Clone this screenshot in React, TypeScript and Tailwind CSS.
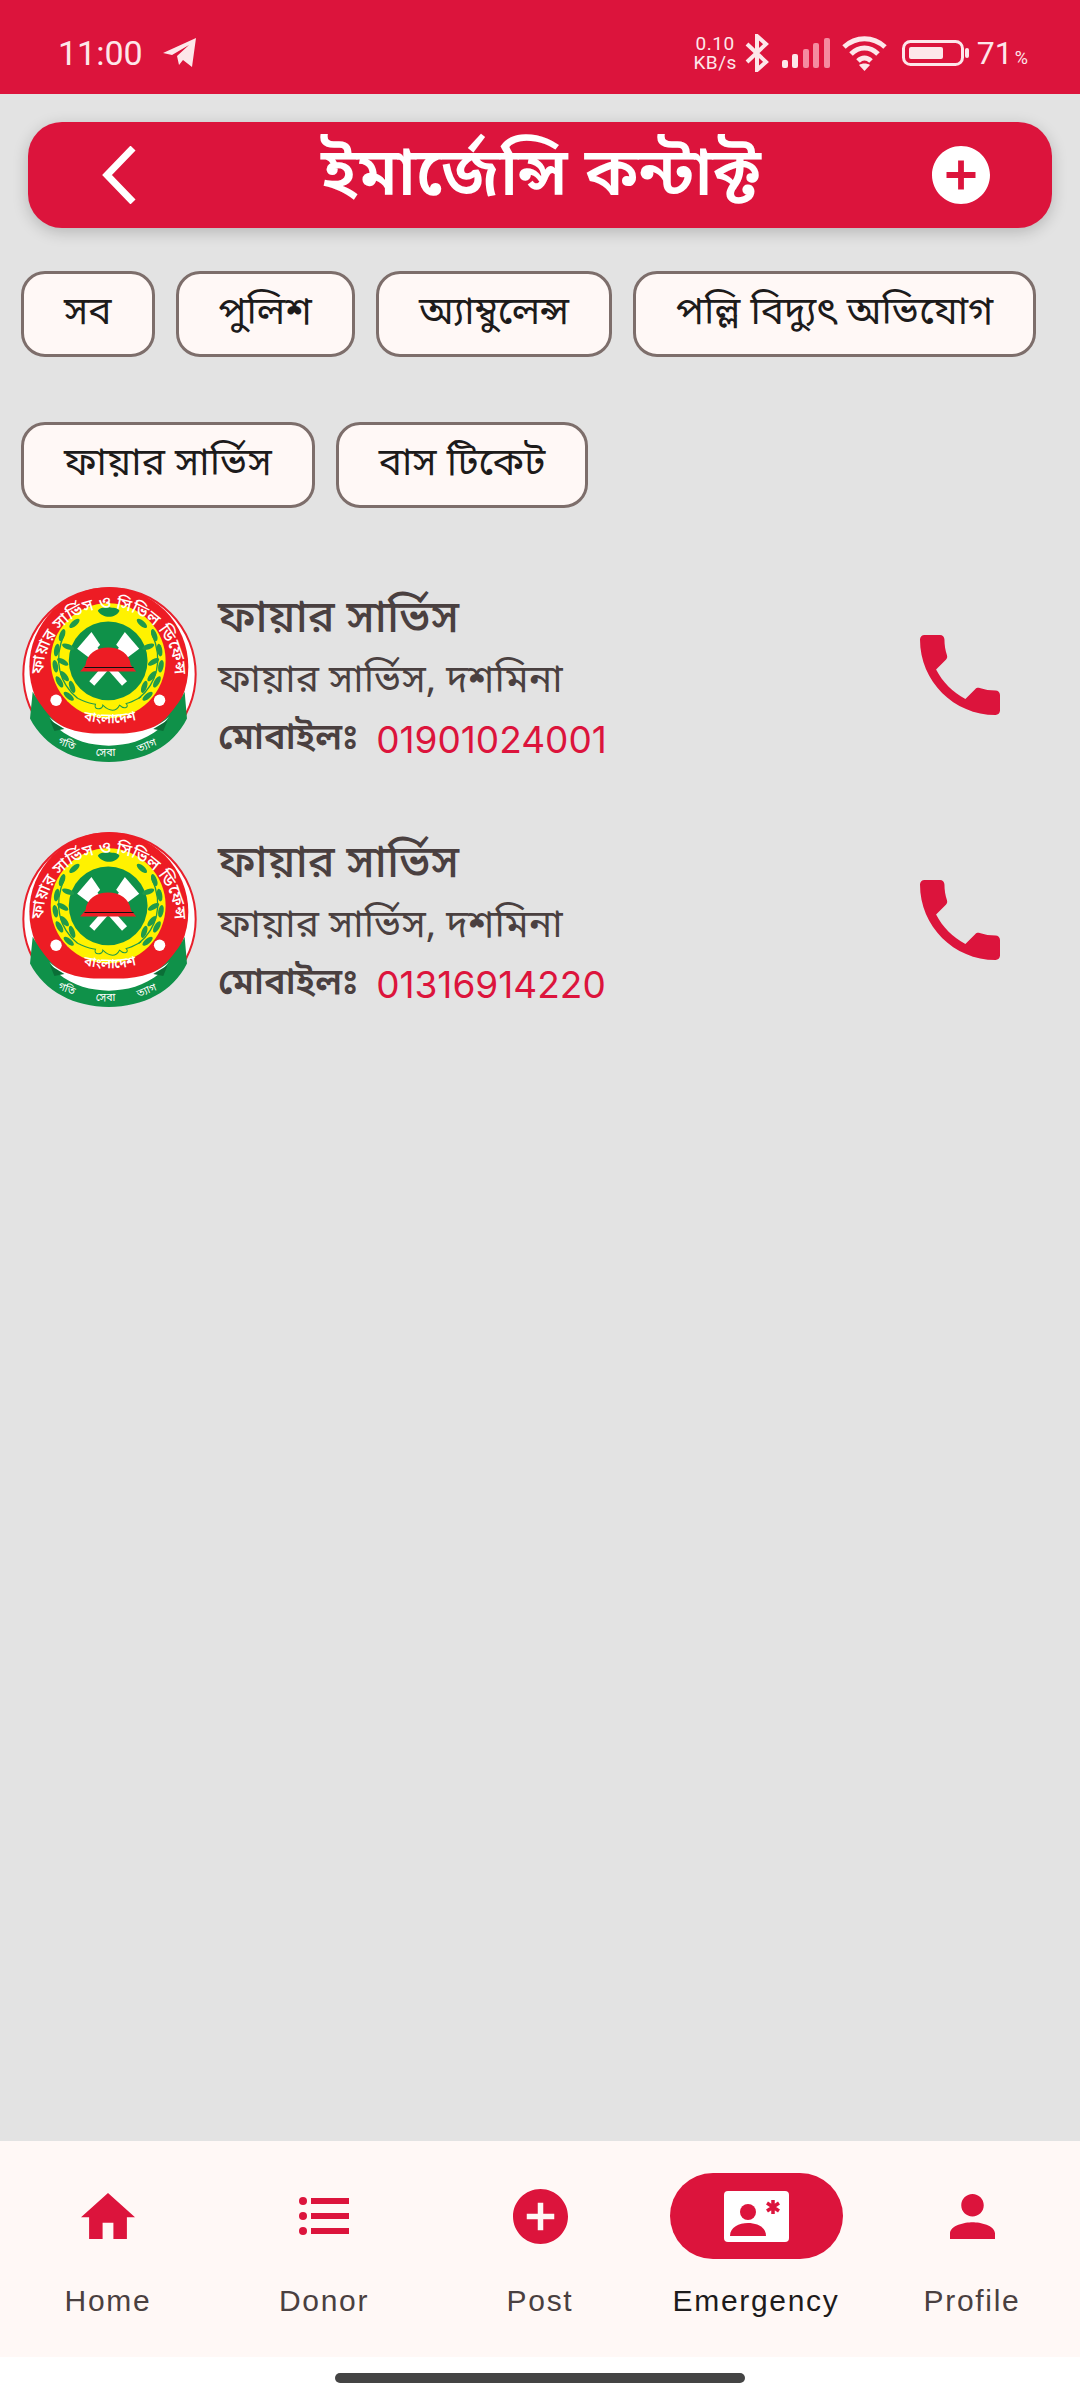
const BN = "font-['Noto_Sans_Bengali','Noto_Sans','Noto_Sans_CJK_SC',sans-serif]";

function Chip({ label }: { label: string }) {
  return (
    <div className="flex h-[86px] items-center rounded-[24px] border-[3px] border-[#7d6e6b] bg-[#fff8f6] px-[40px] text-[39px] font-normal text-[#1d1b1b]">
      {label}
    </div>
  );
}

function Logo() {
  const leaves = (flip: boolean) => (
    <g transform={flip ? "translate(592 0) scale(-1 1)" : undefined} fill="#1f9a4a">
      <path d="M205 385 C150 340 130 270 165 190" fill="none" stroke="#1f9a4a" strokeWidth="4" />
      {[
        [195, 160, -40], [158, 195, -70], [176, 230, 20], [142, 240, -80], [160, 275, 30],
        [138, 288, -100], [165, 318, 50], [150, 335, -120], [188, 350, 70], [178, 378, -140],
      ].map(([x, y, r], i) => (
        <ellipse key={i} cx={x} cy={y} rx="19" ry="8" transform={`rotate(${r} ${x} ${y})`} />
      ))}
    </g>
  );
  return (
    <svg viewBox="35 48 530 530" className="h-[177px] w-[177px] shrink-0">
      <circle cx="300" cy="312" r="258" fill="#fff" stroke="#e8202c" strokeWidth="6" />
      <circle cx="298" cy="290" r="238" fill="#ed1c24" />
      <path d="M70 365 C90 400 105 420 128 445 C175 490 240 505 298 505 C356 505 420 490 468 445 C490 420 508 400 525 365 L532 445 C490 530 400 575 298 575 C196 575 106 530 62 445 Z" fill="#0f9149" />
      <path d="M120 440 C175 490 240 490 298 490 C356 490 420 490 478 440 L450 475 C405 512 350 526 298 526 C246 526 190 512 146 475 Z" fill="#fff" />
      <path d="M122 450 L165 476 L135 482 Z M474 450 L431 476 L461 482 Z" fill="#0b6e37" />
      <circle cx="296" cy="272" r="172" fill="#fff200" />
      <circle cx="296" cy="272" r="118" fill="#0f9149" />
      {leaves(false)}
      {leaves(true)}
      <path d="M265 122 C275 108 285 118 295 108 C305 118 320 108 330 122 C318 146 280 146 265 122 Z" fill="#0f9149" />
      <g stroke="#fff" strokeWidth="20" fill="none">
        <path d="M232 212 L345 340" />
        <path d="M360 212 L247 340" />
      </g>
      <path d="M203 236 L246 186 L272 224 L238 262 Z" fill="#fff" />
      <path d="M389 236 L346 186 L320 224 L354 262 Z" fill="#fff" />
      <path d="M212 304 L228 285 C232 250 262 232 296 232 C330 232 360 250 364 285 L380 304 Z" fill="#ed1c24" />
      <path d="M225 292 H372" stroke="#111" strokeWidth="3" />
      <circle cx="140" cy="390" r="17" fill="#fff" />
      <circle cx="450" cy="390" r="17" fill="#fff" />
      <path d="M205 385 C230 395 240 400 258 402 C250 420 280 420 280 405 C300 425 320 425 330 405 C345 420 360 410 350 400 C370 395 385 385 395 380" fill="none" stroke="#1f9a4a" strokeWidth="3" />
      <defs>
        <path id="logoTop" d="M101 312 A197 197 0 1 1 495 312" />
        <path id="logoMid" d="M188 438 Q300 480 415 438" />
      </defs>
      <text fill="#fff" fontSize="50" fontWeight="500">
        <textPath href="#logoTop" startOffset="50%" textAnchor="middle">ফায়ার সার্ভিস ও সিভিল ডিফেন্স</textPath>
      </text>
      <text fill="#fff" fontSize="40" fontWeight="600">
        <textPath href="#logoMid" startOffset="50%" textAnchor="middle">বাংলাদেশ</textPath>
      </text>
      <text x="168" y="530" fill="#fff" fontSize="32" textAnchor="middle" transform="rotate(22 168 530)">গতি</text>
      <text x="288" y="558" fill="#fff" fontSize="32" textAnchor="middle">সেবা</text>
      <text x="415" y="535" fill="#fff" fontSize="32" textAnchor="middle" transform="rotate(-22 415 535)">ত্যাগ</text>
    </svg>
  );
}

function Phone() {
  return (
    <svg viewBox="3 3 18 18" className="h-[80px] w-[80px] fill-[#dc143c]">
      <path d="M6.62 10.79c1.44 2.83 3.76 5.14 6.59 6.59l2.2-2.2c.27-.27.67-.36 1.02-.24 1.12.37 2.33.57 3.57.57.55 0 1 .45 1 1V20c0 .55-.45 1-1 1-9.39 0-17-7.61-17-17 0-.55.45-1 1-1h3.5c.55 0 1 .45 1 1 0 1.25.2 2.45.57 3.57.11.35.03.74-.25 1.02l-2.2 2.2z" />
    </svg>
  );
}

function Contact({ number }: { number: string }) {
  return (
    <div className="flex h-[177px] items-center">
      <Logo />
      <div className="ml-[20px] flex flex-1 flex-col pt-[8px] text-[#4a4040]">
        <div className="text-[45px] font-medium leading-[62px]">ফায়ার সার্ভিস</div>
        <div className="text-[39px] leading-[60px]">ফায়ার সার্ভিস, দশমিনা</div>
        <div className="flex items-center text-[36px] font-semibold leading-[56px]">
          <span>মোবাইলঃ</span>
          <span className="ml-[18px] font-['Inter',sans-serif] text-[37px] font-normal text-[#dc143c]">{number}</span>
        </div>
      </div>
      <div className="mr-[80px]">
        <Phone />
      </div>
    </div>
  );
}

function NavItem({ label, icon, active }: { label: string; icon: React.ReactNode; active?: boolean }) {
  return (
    <div className="flex flex-1 flex-col items-center">
      <div className={`flex h-[86px] w-[173px] items-center justify-center rounded-full ${active ? "bg-[#dc143c]" : ""}`}>{icon}</div>
      <div className={`mt-[24px] font-['Liberation_Sans',sans-serif] text-[30px] leading-[36px] tracking-[1.7px] ${active ? "text-[#1d1b1b]" : "text-[#4a4040]"}`}>
        {label}
      </div>
    </div>
  );
}

export default function App() {
  return (
    <div className={`flex h-[2400px] w-[1080px] flex-col bg-white ${BN}`}>
      {/* status bar */}
      <div className="flex h-[94px] items-center justify-between bg-[#dc143c] pl-[58px] pr-[52px] pt-[12px] text-[#fde7ea]">
        <div className="flex items-center gap-[20px]">
          <span className="font-['Roboto',sans-serif] text-[34px]">11:00</span>
          <svg viewBox="0 0 34 30" className="h-[30px] w-[34px] fill-[#fde7ea]">
            <path d="M0 15 L33 0 L29 29 L20 22 L16 27 L14 18 L26 7 L9 17 Z" />
          </svg>
        </div>
        <div className="flex items-center font-['Roboto',sans-serif]">
          <div className="flex flex-col items-center text-[19px] leading-[19px] tracking-[0.5px]">
            <span>0.10</span>
            <span>KB/s</span>
          </div>
          <svg viewBox="0 0 24 38" className="ml-[8px] h-[38px] w-[24px] fill-none stroke-[#fde7ea] stroke-[4]">
            <path d="M2 10 L21 28 L12 36 V2 L21 10 L2 28" />
          </svg>
          <svg viewBox="0 0 48 30" className="ml-[13px] h-[30px] w-[48px]">
            <rect x="0" y="22" width="6" height="8" rx="2" fill="#fde7ea" />
            <rect x="10" y="16" width="6" height="14" rx="2" fill="#fde7ea" />
            <rect x="21" y="11" width="6" height="19" rx="2" fill="#f58ba0" />
            <rect x="31" y="5" width="6" height="25" rx="2" fill="#f58ba0" />
            <rect x="42" y="0" width="6" height="30" rx="2" fill="#f58ba0" />
          </svg>
          <svg viewBox="0 0 45 35" className="ml-[12px] h-[35px] w-[45px] fill-none stroke-[#fde7ea] stroke-[5]">
            <path d="M2 11 C14 0 31 0 43 11" />
            <path d="M9 18 C17 10 28 10 36 18" />
            <path d="M16 25 C20 21 25 21 29 25" />
            <path d="M22.5 35 L17 29 C20 27 25 27 28 29 Z" fill="#fde7ea" stroke="none" />
          </svg>
          <svg viewBox="0 0 68 26" className="ml-[15px] h-[26px] w-[68px]">
            <rect x="1.5" y="1.5" width="59" height="23" rx="7" fill="none" stroke="#fde7ea" strokeWidth="3" />
            <rect x="7" y="7" width="34" height="12" rx="2" fill="#fde7ea" />
            <rect x="63" y="8" width="4" height="10" rx="2" fill="#fde7ea" />
          </svg>
          <span className="ml-[7px] text-[32px]">71</span>
          <span className="ml-[2px] mt-[8px] text-[18px]">%</span>
        </div>
      </div>

      {/* body */}
      <div className="flex flex-1 flex-col bg-[#e3e3e3]">
        <div className="mx-[28px] mt-[28px] flex h-[106px] items-center justify-between rounded-[34px] bg-[#dc143c] pl-[74px] pr-[62px] shadow-[0_4px_16px_rgba(0,0,0,0.2)]">
          <svg viewBox="0 0 34 58" className="h-[58px] w-[34px] fill-none stroke-white stroke-[7]">
            <path d="M31 2 L5 29 L31 56" />
          </svg>
          <div className="ml-[14px] mt-[6px] text-[66px] font-semibold leading-none text-white">ইমার্জেন্সি কন্টাক্ট</div>
          <svg viewBox="2 2 20 20" className="h-[58px] w-[58px] fill-white">
            <path d="M12 2C6.48 2 2 6.48 2 12s4.48 10 10 10 10-4.48 10-10S17.52 2 12 2zm5 11h-4v4h-2v-4H7v-2h4V7h2v4h4v2z" />
          </svg>
        </div>

        <div className="ml-[21px] mt-[43px] flex w-[1040px] flex-wrap gap-x-[21px] gap-y-[65px]">
          {["সব", "পুলিশ", "অ্যাম্বুলেন্স", "পল্লি বিদ্যুৎ অভিযোগ", "ফায়ার সার্ভিস", "বাস টিকেট"].map((c) => (
            <Chip key={c} label={c} />
          ))}
        </div>

        <div className="ml-[21px] mt-[78px] flex flex-col gap-[68px]">
          <Contact number="01901024001" />
          <Contact number="01316914220" />
        </div>
      </div>

      {/* bottom nav */}
      <div className="flex h-[216px] items-start bg-[#fff8f6] px-0 pt-[32px]">
        <NavItem
          label="Home"
          icon={
            <svg viewBox="2 3 20 17" className="h-[48px] w-[54px] fill-[#dc143c]">
              <path d="M10 20v-6h4v6h5v-8h3L12 3 2 12h3v8z" />
            </svg>
          }
        />
        <NavItem
          label="Donor"
          icon={
            <svg viewBox="0 0 50 38" className="h-[38px] w-[50px] fill-[#dc143c]">
              <circle cx="4" cy="4" r="4" />
              <circle cx="4" cy="19" r="4" />
              <circle cx="4" cy="34" r="4" />
              <rect x="12" y="1" width="38" height="6" />
              <rect x="12" y="16" width="38" height="6" />
              <rect x="12" y="31" width="38" height="6" />
            </svg>
          }
        />
        <NavItem
          label="Post"
          icon={
            <svg viewBox="2 2 20 20" className="h-[55px] w-[55px] fill-[#dc143c]">
              <path d="M12 2C6.48 2 2 6.48 2 12s4.48 10 10 10 10-4.48 10-10S17.52 2 12 2zm5 11h-4v4h-2v-4H7v-2h4V7h2v4h4v2z" />
            </svg>
          }
        />
        <NavItem
          active
          label="Emergency"
          icon={
            <svg viewBox="0 0 65 51" className="h-[51px] w-[65px]">
              <rect width="65" height="51" rx="4" fill="#fff" />
              <circle cx="24" cy="21" r="8" fill="#dc143c" />
              <path d="M6 45 C6 36 15 32 24 32 C33 32 42 36 42 45 Z" fill="#dc143c" />
              <path d="M49 9 V23 M43 12 L55 20 M55 12 L43 20" stroke="#dc143c" strokeWidth="3.5" />
            </svg>
          }
        />
        <NavItem
          label="Profile"
          icon={
            <svg viewBox="4 4 16 16" className="h-[45px] w-[45px] fill-[#dc143c]">
              <path d="M12 12c2.21 0 4-1.79 4-4s-1.79-4-4-4-4 1.79-4 4 1.79 4 4 4zm0 2c-2.67 0-8 1.07-8 4v2h16v-2c0-2.93-5.33-4-8-4z" />
            </svg>
          }
        />
      </div>
      <div className="flex h-[43px] items-start justify-center bg-white pt-[16px]">
        <div className="h-[10px] w-[410px] rounded-full bg-[#444]" />
      </div>
    </div>
  );
}
